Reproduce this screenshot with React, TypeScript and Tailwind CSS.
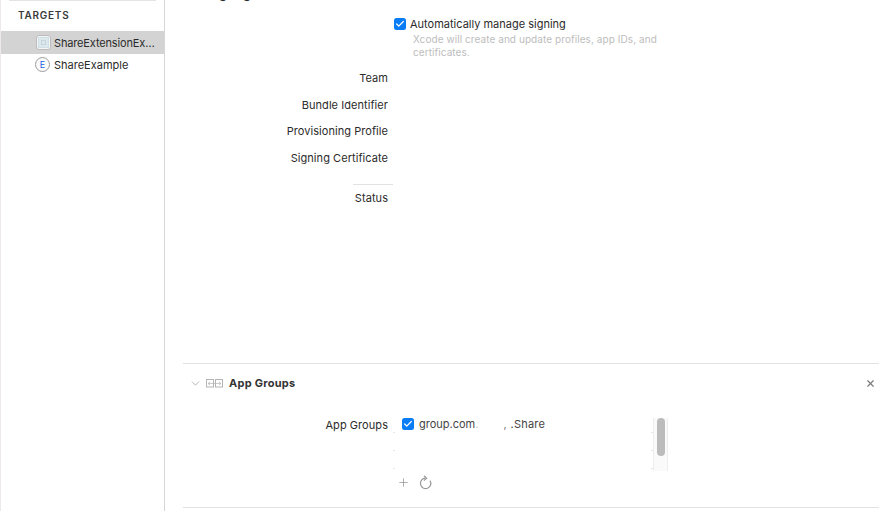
import React from 'react';
import { Check, ChevronDown, Plus, X } from 'lucide-react';

const labelClass = 'w-[205px] text-right text-[11px] leading-[14px] tracking-[0.06px] text-[#2b2b2b]';

function SigningRow({ label, className }: { label: string; className: string }) {
  return (
    <div className={`flex ${className}`}>
      <span className={labelClass}>{label}</span>
    </div>
  );
}

function Checkbox() {
  return (
    <span className="flex h-3 w-3 shrink-0 items-center justify-center rounded-[2.5px] bg-[#0a7cf5]">
      <Check size={10} strokeWidth={3} className="text-white" />
    </span>
  );
}

function AppGroupsIcon() {
  return (
    <svg width="17" height="9" viewBox="0 0 17 9" fill="none" stroke="#b4b4b4" strokeWidth="1">
      <rect x="0.5" y="0.5" width="7" height="7.5" />
      <rect x="9.5" y="0.5" width="7" height="7.5" />
      <path d="M2 4.5h13M4 3l-2 1.5L4 6M13 3l2 1.5L13 6" strokeWidth="0.7" />
    </svg>
  );
}

function RefreshIcon() {
  return (
    <svg width="13" height="15" viewBox="0 0 13 15" fill="none" stroke="#9a9a9a" strokeWidth="1.2">
      <path d="M6.5 3.2A5.2 5.2 0 1 0 11 5.6" />
      <path d="M5 0.8L7.6 3.2L5 5.6" />
    </svg>
  );
}

function SidebarIcon() {
  return (
    <span className="flex h-[15px] w-[15px] items-center justify-center rounded-[3px] border border-[#bcbcbc] bg-[#f3f5f6]">
      <span className="flex h-[11px] w-[11px] items-center justify-center border border-[#cfe0e6] bg-[#dce8ec]">
        <span className="h-[5px] w-[5px] border border-[#c3d6dd]" />
      </span>
    </span>
  );
}

export default function App() {
  return (
    <div className="flex h-[511px] w-[894px] overflow-hidden bg-white font-['Inter',sans-serif] text-[#2b2b2b]">
      <aside className="w-[165px] shrink-0 border-x border-l-[#eeeaec] border-r-[#d9d4d7]">
        <div className="ml-2 mr-2 h-px bg-[#e4e4e4]" />
        <div className="ml-[17px] mt-2 text-[10px] font-semibold leading-[13px] tracking-[0.75px] text-[#3a3a3a]">
          TARGETS
        </div>
        <div className="mt-[9px] flex h-[23px] items-center gap-[3px] bg-[#d3d3d3] pl-[35px]">
          <SidebarIcon />
          <span className="text-[11px] leading-[14px] tracking-[-0.15px]">ShareExtensionEx…</span>
        </div>
        <div className="-mt-px flex h-[23px] items-center gap-[4px] pl-[34px]">
          <span className="flex h-[15px] w-[15px] items-center justify-center rounded-full border border-[#9c9c9c] bg-[#fbfbfb] text-[9px] leading-none text-[#2a5fe0]">
            E
          </span>
          <span className="text-[11px] leading-[14px]">ShareExample</span>
        </div>
      </aside>

      <main className="flex-1 pl-[18px] pr-[15px]">
        <section className="flow-root h-[363px]">
          <h2 className="-mt-[12px] ml-[26px] h-[14px] text-[11px] font-bold leading-[14px] tracking-[0.1px]">Signing</h2>
          <div className="mt-[15px] flex items-center gap-1 pl-[211px]">
            <Checkbox />
            <span className="text-[11px] leading-[14px]">Automatically manage signing</span>
          </div>
          <p className="ml-[230px] mt-[2px] w-[270px] text-[10px] leading-[13px] tracking-[0.07px] text-[#bdbdbd]">
            Xcode will create and update profiles, app IDs, and certificates.
          </p>
          <SigningRow label="Team" className="mt-[12px]" />
          <SigningRow label="Bundle Identifier" className="mt-[13px]" />
          <SigningRow label="Provisioning Profile" className="mt-[12px]" />
          <SigningRow label="Signing Certificate" className="mt-[13px]" />
          <div className="ml-[170px] mt-[19px] h-px w-10 bg-[#e2e2e2]" />
          <SigningRow label="Status" className="mt-[6px]" />
        </section>

        <section className="h-[145px] border-y border-[#e3e3e3]">
          <header className="flex h-[38px] items-center pl-[6px] pr-[3px]">
            <ChevronDown size={13} strokeWidth={1.5} className="text-[#a5a5a5]" />
            <span className="ml-[4px] flex">
              <AppGroupsIcon />
            </span>
            <span className="ml-[6px] text-[11px] font-bold leading-[14px] tracking-[0.25px] text-[#333333]">App Groups</span>
            <X size={11} strokeWidth={2.5} className="ml-auto text-[#777777]" />
          </header>
          <div className="flex pt-[15px]">
            <span className={`${labelClass} pt-[1px]`}>App Groups</span>
            <div className="ml-[5px] w-[275px]">
              <div className="relative h-[54px] pl-[9px]">
                <div className="flex items-center gap-[5px]">
                  <Checkbox />
                  <span className="text-[11px] leading-[14px] text-[#444444]">group.com</span>
                  <span className="-ml-[5px] text-[11px] leading-[14px] text-[#c8c8c8]">.</span>
                  <span className="ml-[20px] text-[11px] leading-[14px] text-[#777777]">,</span>
                  <span className="-ml-[1px] text-[11px] leading-[14px] tracking-[0.2px] text-[#444444]">.Share</span>
                </div>
                <span className="absolute left-0 top-[15px] h-px w-[2px] bg-[#e6e6e6]" />
                <span className="absolute left-0 top-[33px] h-px w-[2px] bg-[#e6e6e6]" />
                <span className="absolute left-0 top-[51px] h-px w-[2px] bg-[#e6e6e6]" />
                <div className="absolute bottom-0 right-0 top-px flex w-[15px] justify-center border-x border-[#eeeeee] bg-[#fafafa]">
                  <span className="h-[38px] w-[8px] rounded-full bg-[#bcbcbc]" />
                </div>
                <span className="absolute right-[15px] top-[15px] h-px w-[2px] bg-[#e6e6e6]" />
                <span className="absolute right-[15px] top-[33px] h-px w-[2px] bg-[#e6e6e6]" />
                <span className="absolute right-[15px] top-[51px] h-px w-[2px] bg-[#e6e6e6]" />
              </div>
              <div className="mt-[4px] flex items-center gap-[9px] pl-[4px]">
                <Plus size={13} strokeWidth={1.3} className="text-[#8f8f8f]" />
                <RefreshIcon />
              </div>
            </div>
          </div>
        </section>
      </main>
    </div>
  );
}
